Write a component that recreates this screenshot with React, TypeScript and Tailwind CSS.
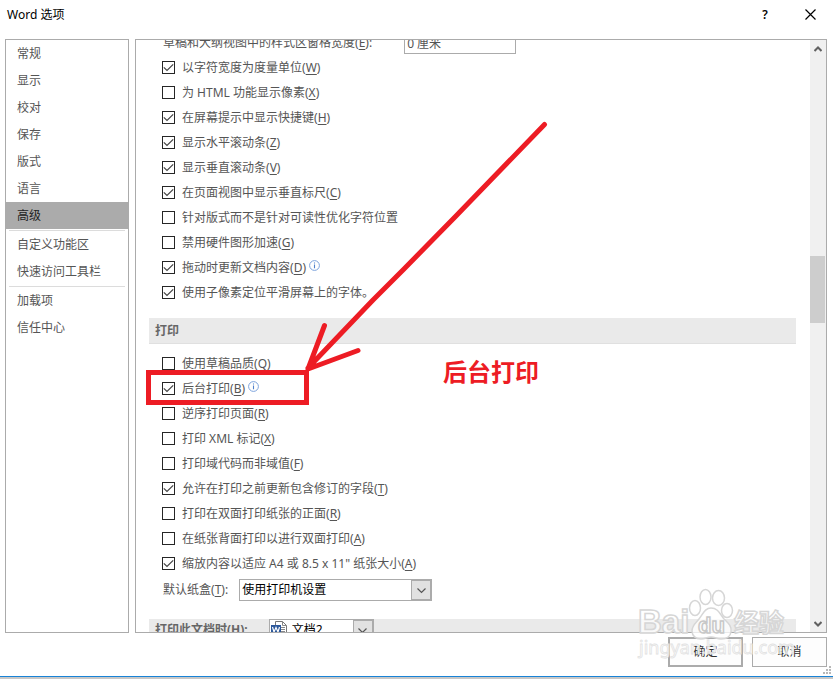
import { ReactNode } from "react";

type Option = {
  id: string;
  label: string;
  accessKey?: string;
  checked?: boolean;
  info?: boolean;
};

const sections = [
  ["常规", "显示", "校对", "保存", "版式", "语言", "高级"],
  ["自定义功能区", "快速访问工具栏"],
  ["加载项", "信任中心"],
];

const displayOptions: Option[] = [
  { id: "char-width", label: "以字符宽度为度量单位", accessKey: "W", checked: true },
  { id: "html-pixels", label: "为 HTML 功能显示像素", accessKey: "X" },
  { id: "shortcut-tips", label: "在屏幕提示中显示快捷键", accessKey: "H", checked: true },
  { id: "h-scroll", label: "显示水平滚动条", accessKey: "Z", checked: true },
  { id: "v-scroll", label: "显示垂直滚动条", accessKey: "V", checked: true },
  { id: "v-ruler", label: "在页面视图中显示垂直标尺", accessKey: "C", checked: true },
  { id: "char-position", label: "针对版式而不是针对可读性优化字符位置" },
  { id: "no-hw-accel", label: "禁用硬件图形加速", accessKey: "G" },
  { id: "drag-update", label: "拖动时更新文档内容", accessKey: "D", checked: true, info: true },
  { id: "subpixel", label: "使用子像素定位平滑屏幕上的字体。", checked: true },
];

const printOptions: Option[] = [
  { id: "draft", label: "使用草稿品质", accessKey: "Q" },
  { id: "background", label: "后台打印", accessKey: "B", checked: true, info: true },
  { id: "reverse", label: "逆序打印页面", accessKey: "R" },
  { id: "xml-tags", label: "打印 XML 标记", accessKey: "X" },
  { id: "field-codes", label: "打印域代码而非域值", accessKey: "F" },
  { id: "tracked-fields", label: "允许在打印之前更新包含修订的字段", accessKey: "T", checked: true },
  { id: "duplex-front", label: "打印在双面打印纸张的正面", accessKey: "R" },
  { id: "duplex-back", label: "在纸张背面打印以进行双面打印", accessKey: "A" },
  { id: "scale", label: '缩放内容以适应 A4 或 8.5 x 11" 纸张大小', accessKey: "A", checked: true },
];

const Mnemonic = ({ letter }: { letter: string }) => (
  <>
    (<u className="underline-offset-2">{letter}</u>)
  </>
);

const InfoIcon = () => (
  <svg className="mb-1 ml-[3px] h-[11px] w-[11px]" viewBox="0 0 11 11" fill="none">
    <circle cx="5.5" cy="5.5" r="4.9" stroke="#7da3dc" />
    <path d="M5.5 4.6v3.6M5.5 2.4v1.2" stroke="#4f81cc" strokeWidth="1.1" />
  </svg>
);

const OptionRow = ({ option }: { option: Option }) => (
  <div className="flex h-[25px] items-center pl-[13px]">
    <div className="grid shrink-0">
      <input
        type="checkbox"
        id={option.id}
        defaultChecked={option.checked}
        className="peer col-start-1 row-start-1 h-[13px] w-[13px] appearance-none border border-[#262626] bg-white"
      />
      <svg
        className="pointer-events-none invisible col-start-1 row-start-1 h-[13px] w-[13px] peer-checked:visible"
        viewBox="0 0 13 13"
        fill="none"
      >
        <path d="M1.8 6.3 5 9.5 11.2 3.3" stroke="#444" strokeWidth="1.2" />
      </svg>
    </div>
    <label htmlFor={option.id} className="pl-[7px] whitespace-nowrap">
      {option.label}
      {option.accessKey && <Mnemonic letter={option.accessKey} />}
    </label>
    {option.info && <InfoIcon />}
  </div>
);

const Chevron = () => (
  <svg className="h-[9px] w-[9px]" viewBox="0 0 9 9" fill="none">
    <path d="M.5 2.5 4.5 6.5 8.5 2.5" stroke="#555" strokeWidth="1.2" />
  </svg>
);

const WordIcon = () => (
  <svg className="h-4 w-4" viewBox="0 0 16 16">
    <path d="M4.5.5h7l4 4v11h-11z" fill="#fff" stroke="#777" />
    <path d="M11.5.5v4h4M10 6.5h4M10 8.5h4M10 10.5h4M10 12.5h4" fill="none" stroke="#888" />
    <path d="M0 4h10v9H0z" fill="#2b579a" />
    <path d="M1.5 6 3 11l2-4.5L7 11l1.5-5" fill="none" stroke="#fff" strokeWidth="1.2" />
  </svg>
);

const DropDown = ({
  id,
  value,
  width,
  icon,
}: {
  id: string;
  value: string;
  width: string;
  icon?: ReactNode;
}) => (
  <div className={`grid h-[22px] ${width} grid-cols-[20px_1fr_20px] border border-[#ababab] bg-white`}>
    <select
      id={id}
      className={`col-span-3 col-start-1 row-start-1 appearance-none bg-transparent font-normal text-black ${
        icon ? "pl-[22px]" : "pl-0.5"
      }`}
    >
      <option>{value}</option>
    </select>
    {icon && (
      <span className="pointer-events-none col-start-1 row-start-1 flex items-start pt-px pl-px">
        {icon}
      </span>
    )}
    <span className="pointer-events-none col-start-3 row-start-1 flex items-center justify-center border border-[#ababab] bg-[#e1e1e1]">
      <Chevron />
    </span>
  </div>
);

const ScrollBar = () => (
  <div className="flex w-4 shrink-0 flex-col bg-[#f0f0f0]">
    <button aria-label="向上滚动" className="flex h-[17px] items-center justify-center">
      <svg className="h-2 w-2" viewBox="0 0 8 8" fill="none">
        <path d="M.5 6 4 2.5l3.5 3.5" stroke="#606060" strokeWidth="2" />
      </svg>
    </button>
    <div className="grow-[199]" />
    <div className="mr-px grow-[67] bg-[#cdcdcd]" />
    <div className="grow-[292]" />
    <button aria-label="向下滚动" className="flex h-[17px] items-center justify-center">
      <svg className="h-2 w-2" viewBox="0 0 8 8" fill="none">
        <path d="M.5 2 4 5.5l3.5-3.5" stroke="#606060" strokeWidth="2" />
      </svg>
    </button>
  </div>
);

const Annotations = () => (
  <>
    <svg
      className="pointer-events-none absolute top-0 left-0 h-[679px] w-[833px]"
      viewBox="0 0 833 679"
      fill="none"
      stroke="#ed1c24"
      strokeWidth="5"
      strokeLinecap="round"
      strokeLinejoin="round"
    >
      <rect x="148.5" y="372.5" width="158" height="30" strokeLinejoin="miter" />
      <path d="M544.5 124.5 455 217 403 270 373 300 308 368M324.5 325.5 308 369 358 350.5" />
    </svg>
    <p className="pointer-events-none absolute top-[354px] left-[443px] text-[24px] leading-9 font-bold text-[#ed1c24]">
      后台打印
    </p>
  </>
);

const Watermark = () => (
  <svg
    className="pointer-events-none absolute right-[33px] bottom-[9px] h-[84px] w-[164px]"
    viewBox="0 0 164 84"
    fill="#fff"
    fillOpacity="0.75"
    stroke="#d6d6d6"
    strokeWidth="1.5"
    fontWeight="bold"
  >
    <ellipse cx="59" cy="22" rx="5.5" ry="7.5" />
    <ellipse cx="69.5" cy="11" rx="5.5" ry="7.5" />
    <ellipse cx="82.5" cy="12" rx="6" ry="7.5" />
    <ellipse cx="91" cy="24.5" rx="5.5" ry="7" />
    <path d="M75 22c7 0 9 6 13 11 4 4 8 7 7 13-1 6-6 7-10 7-4 0-6-2-10-2s-6 2-10 2c-5 0-9-3-9-8 0-6 4-8 7-12 4-5 6-11 12-11z" />
    <g className="font-['Liberation_Sans',sans-serif]">
      <text x="2" y="47" fontSize="33">
        Bai
      </text>
      <text x="62" y="47" fontSize="22" stroke="#c8c8c8">
        du
      </text>
    </g>
    <text x="98" y="46" fontSize="25">
      经验
    </text>
    <text x="3" y="68" fontSize="18" fontWeight="normal" stroke="#e2e2e2" strokeWidth="0.8">
      jingyan.baidu.com
    </text>
  </svg>
);

export default function App() {
  return (
    <div className="relative flex h-screen flex-col overflow-hidden bg-white font-['Noto_Sans','Noto_Sans_CJK_SC',sans-serif] text-[12px] leading-4 text-[#555]">
      {/* TITLE BAR */}
      <header className="flex h-[39px] shrink-0 items-start pt-[7px] pr-2 pl-[7px] text-black">
        <h1 className="flex-1">Word 选项</h1>
        <button aria-label="帮助" className="mr-[19px] h-4 w-[22px] font-semibold">
          ?
        </button>
        <button aria-label="关闭" className="flex h-[14px] w-[30px] items-center justify-center">
          <svg className="h-[11px] w-[11px]" viewBox="0 0 11 11" stroke="#000" strokeWidth="1.2">
            <path d="M.5.5l10 10M10.5.5l-10 10" />
          </svg>
        </button>
      </header>

      <main className="flex min-h-0 flex-1 gap-[6px] pr-[6px] pl-[5px]">
        {/* CATEGORIES */}
        <nav className="w-[124px] shrink-0 border border-[#ababab]">
          {sections.map((items, index) => (
            <div key={items[0]}>
              {index > 0 && <hr className="mx-[3px] mt-px border-[#dcdcdc]" />}
              {items.map((item) => (
                <button
                  key={item}
                  className={`block h-[27px] w-full pl-[11px] text-left ${
                    item === "高级" ? "bg-[#ababab] text-[#222]" : ""
                  }`}
                >
                  {item}
                </button>
              ))}
            </div>
          ))}
        </nav>

        {/* OPTIONS */}
        <div className="flex min-w-0 flex-1 overflow-hidden border border-[#ababab]">
          <div className="-mt-[10px] min-w-0 flex-1 pr-[14px] pl-[13px]">
            <div className="flex h-[25px] items-center gap-8 pl-[14px]">
              <label htmlFor="pane-width" className="whitespace-nowrap">
                草稿和大纲视图中的样式区窗格宽度
                <Mnemonic letter="E" />:
              </label>
              <input
                id="pane-width"
                defaultValue="0 厘米"
                className="h-[23px] w-[112px] border border-[#ababab] px-0.5"
              />
            </div>
            {displayOptions.map((option) => (
              <OptionRow key={option.id} option={option} />
            ))}

            <h2 className="mt-[13px] mb-[7px] flex h-[26px] items-center border-b border-[#e0e0e0] bg-[#eaeaea] pl-[6px] font-bold text-[#666]">
              打印
            </h2>
            {printOptions.map((option) => (
              <OptionRow key={option.id} option={option} />
            ))}
            <div className="flex h-7 items-center gap-[11px] pl-[14px]">
              <label htmlFor="tray" className="whitespace-nowrap">
                默认纸盒
                <Mnemonic letter="T" />:
              </label>
              <DropDown id="tray" value="使用打印机设置" width="w-[193px]" />
            </div>

            <div className="mt-[15px] flex h-[26px] items-start gap-[21px] bg-[#eaeaea] pl-[6px] font-bold text-[#666]">
              <label htmlFor="print-doc" className="pt-[3px] whitespace-nowrap">
                打印此文档时
                <Mnemonic letter="H" />:
              </label>
              <DropDown id="print-doc" value="文档2" width="w-[105px]" icon={<WordIcon />} />
            </div>
          </div>
          <ScrollBar />
        </div>
      </main>

      {/* BUTTONS */}
      <footer className="flex h-[43px] shrink-0 items-start justify-end gap-[9px] pt-1 pr-[6px] text-[#333]">
        <button className="h-[30px] w-[75px] border-2 border-[#ababab] bg-[#fdfdfd]">确定</button>
        <button className="h-[30px] w-[75px] border border-[#ababab] bg-[#fdfdfd]">取消</button>
      </footer>
      <div className="h-[3px] shrink-0 border-t border-[#1883d7] bg-[#c8c8c8]" />

      <svg className="absolute right-0.5 bottom-[5px] h-2 w-2" viewBox="0 0 8 8" fill="#b8b8b8">
        <path d="M6 0h2v2H6zM3 3h2v2H3zM6 3h2v2H6zM0 6h2v2H0zM3 6h2v2H3zM6 6h2v2H6z" />
      </svg>
      <Watermark />
      <Annotations />
    </div>
  );
}
